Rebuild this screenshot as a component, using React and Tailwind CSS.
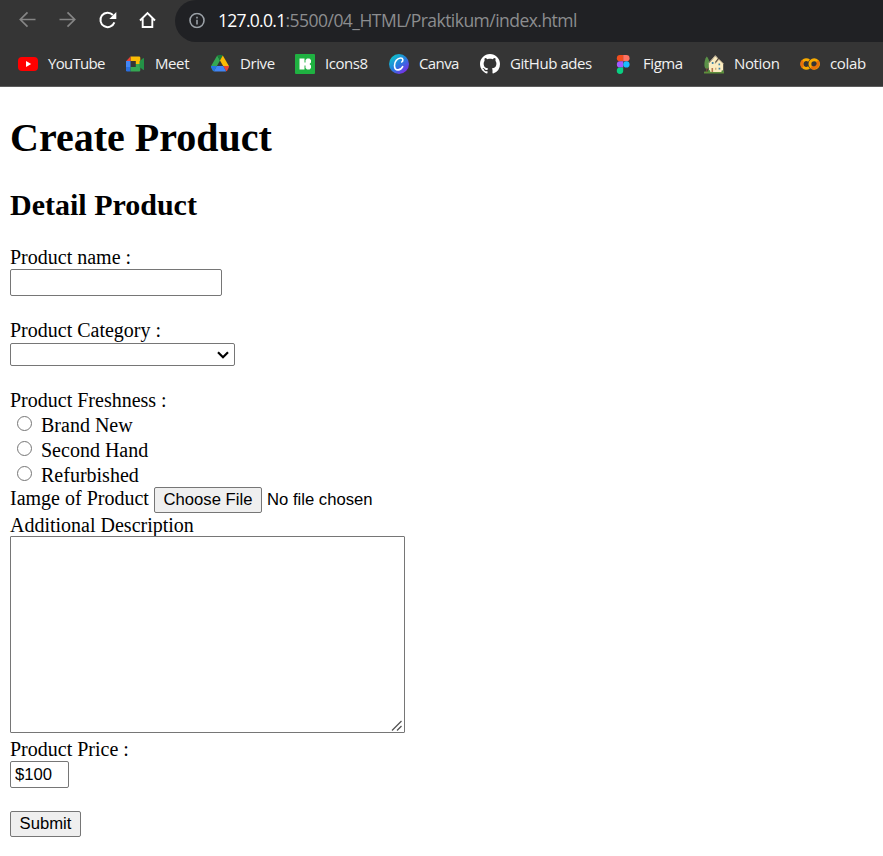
import React from "react";

function YouTubeIcon() {
  return (
    <svg viewBox="0 0 20 20" className="size-5">
      <rect x="0" y="3" width="20" height="14" rx="4" fill="#f00" />
      <path d="M8 7l5.2 3L8 13z" fill="#fff" />
    </svg>
  );
}

function MeetIcon() {
  return (
    <svg viewBox="0 0 20 20" className="size-5">
      <path d="M5.500 2.500H14a1.300 1.300 0 0 1 1.300 1.300V10H10.800V7H5.500z" fill="#fbbc04" />
      <path d="M1 7.200L5.500 2.500V7.200z" fill="#ea4335" />
      <path d="M1 7H5.500V13.500H1z" fill="#4285f4" />
      <path d="M1 13H5.500V17.500H2.300A1.300 1.300 0 0 1 1 16.200z" fill="#2a6fe0" />
      <path d="M5.500 13H10.800V10H15.300V16.200A1.300 1.300 0 0 1 14 17.500H5.500z" fill="#34a853" />
      <path d="M14.500 7.200L18 4.200q1-.6 1 .5V15.300q0 1.100-1 .5L14.500 13z" fill="#249247" />
    </svg>
  );
}

function DriveIcon() {
  return (
    <svg viewBox="0 0 20 20" className="size-5">
      <path d="M7.200 1.500L10 6.400 3.900 17.200Q3 17 2.600 16.200L1.200 13.600Q.8 12.800 1.100 12z" fill="#34a853" />
      <path d="M7.200 1.500Q8 1 8.800 1H11.200Q12.200 1 12.800 1.500L10 6.400z" fill="#188038" />
      <path d="M12.800 1.500L18.900 12H13.200L10 6.400z" fill="#fbbc04" />
      <path d="M13.200 12H18.900Q19.200 12.900 18.800 13.600L17.400 16.200Q17 17 16.100 17.200z" fill="#ea4335" />
      <path d="M6.800 12H13.200L16.100 17.200Q15.700 17.400 15 17.400H5Q4.300 17.400 3.900 17.200z" fill="#4285f4" />
      <path d="M1.100 12H6.800L3.900 17.200Q3 17 2.600 16.200L1.200 13.600Q.8 12.800 1.100 12z" fill="#2474e5" />
    </svg>
  );
}

function Icons8Icon() {
  return (
    <svg viewBox="0 0 20 20" className="size-5">
      <rect width="20" height="20" rx="1" fill="#1fb141" />
      <path
        d="M4.500 4.500H9.500V8.500H10.500V6L12 4.500H14.500L16 6V8.500L14.500 10 16 11.500V14L14.500 15.500H12L10.500 14V11.500H9.500V15.500H4.500z"
        fill="#fff"
      />
    </svg>
  );
}

function CanvaIcon() {
  return (
    <svg viewBox="0 0 20 20" className="size-5">
      <defs>
        <linearGradient id="canva" x1="0.100" y1="0.100" x2="0.800" y2="0.950">
          <stop offset="0" stopColor="#10c4c8" />
          <stop offset="0.500" stopColor="#237fdd" />
          <stop offset="1" stopColor="#7d2ae8" />
        </linearGradient>
      </defs>
      <circle cx="10" cy="10" r="10" fill="url(#canva)" />
      <path
        d="M12.700 7.900C14.400 7.300 14.400 4 11.700 4 8.300 4 5.500 7.800 5.500 11.400c0 2.800 1.400 4.500 3.600 4.500 2.100 0 3.700-1.400 4.600-3.200"
        fill="none"
        stroke="#fff"
        strokeWidth="1.600"
        strokeLinecap="round"
      />
    </svg>
  );
}

function GitHubIcon() {
  return (
    <svg viewBox="0 0 16 16" className="size-5">
      <path
        fill="#fff"
        d="M8 0C3.580 0 0 3.580 0 8c0 3.540 2.290 6.530 5.470 7.590.4.070.55-.17.55-.38 0-.19-.01-.82-.01-1.490-2.010.37-2.530-.49-2.690-.94-.09-.23-.48-.94-.82-1.130-.28-.15-.68-.52-.01-.53.63-.01 1.080.58 1.230.82.72 1.210 1.870.87 2.330.66.07-.52.28-.87.51-1.070-1.780-.2-3.640-.89-3.640-3.950 0-.87.31-1.590.82-2.150-.08-.2-.36-1.020.08-2.120 0 0 .67-.21 2.200.82.64-.18 1.320-.27 2-.27s1.360.09 2 .27c1.530-1.040 2.200-.82 2.200-.82.44 1.100.16 1.920.08 2.120.51.56.82 1.270.82 2.150 0 3.070-1.870 3.750-3.650 3.950.29.25.54.73.54 1.480 0 1.070-.01 1.930-.01 2.200 0 .21.15.46.55.38A8.010 8.010 0 0 0 16 8c0-4.420-3.580-8-8-8z"
      />
    </svg>
  );
}

function FigmaIcon() {
  return (
    <svg viewBox="0 0 20 20" className="size-5">
      <path d="M10.200 1H7a3.150 3.150 0 0 0 0 6.300h3.200z" fill="#f24e1e" />
      <path d="M10.200 1h3.200a3.150 3.150 0 0 1 0 6.300h-3.200z" fill="#ff7262" />
      <path d="M10.200 7.300H7a3.150 3.150 0 0 0 0 6.300h3.200z" fill="#a259ff" />
      <circle cx="13.400" cy="10.450" r="3.150" fill="#1abcfe" />
      <path d="M7 13.600h3.200v3.150A3.200 3.150 0 1 1 7 13.600z" fill="#0acf83" />
    </svg>
  );
}

function HouseIcon() {
  return (
    <svg viewBox="0 0 20 20" className="size-5">
      <rect x="0" y="17.500" width="20" height="2" rx=".5" fill="#5f8f3c" />
      <path d="M2.800 2.500C1 4.500.3 8 .4 11c.1 2.500 1 4 2.400 4s2.600-2 2.600-5S4.500 4 2.800 2.500z" fill="#5b9148" />
      <rect x="2.300" y="14" width="1" height="4" fill="#805538" />
      <path d="M4.800 9.500L11.300 2 19.200 9.500V18H4.800z" fill="#fbecc0" />
      <path d="M4.300 9.500L11.300 1.500 13.500 3.800" fill="none" stroke="#b9aa92" strokeWidth="1" />
      <path d="M10.800 10L15 5.300 19.600 10" fill="none" stroke="#bfae8e" strokeWidth=".8" />
      <path d="M11.300 8.500L14.800 4.200" stroke="#54493f" strokeWidth="1.100" />
      <path d="M7.800 8h1.700v2H7.800zM14.500 9.500h1.600v1.800h-1.600zM14.600 13.800h1.700v1.800h-1.700z" fill="#4386a8" />
      <path d="M7.500 14h1.600v4H7.500z" fill="#b3764c" />
      <path d="M11 13.700h1.400v2H11z" fill="#cfae77" />
      <circle cx="5" cy="17.300" r="1.200" fill="#4f8a3c" />
      <circle cx="18.500" cy="17.300" r="1.100" fill="#4f8a3c" />
    </svg>
  );
}

function ColabIcon() {
  return (
    <svg viewBox="0 0 20 20" className="size-5" fill="none" strokeWidth="2.900">
      <path d="M9 6.700A4.300 4.300 0 1 0 9 13.300" stroke="#f9ab00" />
      <path d="M3 6.900A4.300 4.300 0 0 0 3 13.100" stroke="#e8710a" />
      <circle cx="14.200" cy="10" r="4.300" stroke="#f9ab00" />
      <path d="M11.200 13A4.300 4.300 0 0 0 17.200 7" stroke="#e8710a" />
    </svg>
  );
}

const bookmarks = [
  { name: "YouTube", Icon: YouTubeIcon, width: "w-[107px]", tracking: "tracking-[-0.7px]" },
  { name: "Meet", Icon: MeetIcon, width: "w-[85px]", tracking: "tracking-[-0.4px]" },
  { name: "Drive", Icon: DriveIcon, width: "w-[85px]", tracking: "tracking-[-0.4px]" },
  { name: "Icons8", Icon: Icons8Icon, width: "w-[94px]", tracking: "tracking-[-0.45px]" },
  { name: "Canva", Icon: CanvaIcon, width: "w-[91px]", tracking: "tracking-[-0.6px]" },
  { name: "GitHub ades", Icon: GitHubIcon, width: "w-[133px]", tracking: "tracking-[-0.42px]" },
  { name: "Figma", Icon: FigmaIcon, width: "w-[91px]", tracking: "tracking-[-0.45px]" },
  { name: "Notion", Icon: HouseIcon, width: "w-[96px]", tracking: "tracking-[-0.35px]" },
  { name: "colab", Icon: ColabIcon, width: "w-[70px]", tracking: "tracking-[-0.35px]" },
];

function Toolbar() {
  return (
    <div className="flex h-[42px] items-start">
      <div className="flex gap-5 pt-[10px] pl-[18px]">
        <svg viewBox="0 0 20 20" className="size-5" fill="none" stroke="#858585" strokeWidth="1.700">
          <path d="M17.500 9.500H2.500M9.500 2.300L2.300 9.500l7.200 7.200" />
        </svg>
        <svg viewBox="0 0 20 20" className="size-5" fill="none" stroke="#858585" strokeWidth="1.700">
          <path d="M1.500 9.500H16.500M9.500 2.300l7.200 7.200-7.200 7.200" />
        </svg>
        <svg viewBox="0 0 20 20" className="size-5" fill="none" stroke="#fff" strokeWidth="2">
          <path d="M14.900 5A7.200 7.200 0 1 0 16.400 12.400" />
          <path d="M18.300 2v7h-7z" fill="#fff" stroke="none" />
        </svg>
        <svg viewBox="0 0 20 20" className="size-5" fill="none" stroke="#fff" strokeWidth="1.900">
          <path d="M2 10.500L9.500 3l7.500 7.500M4.700 8.500V17h9.600V8.500" />
        </svg>
      </div>
      <div className="ml-[17px] flex h-[42px] flex-1 items-center rounded-l-full bg-[#202124] pl-[14px]">
        <svg viewBox="0 0 16 16" className="size-4 -translate-y-[0.5px]" fill="none" stroke="#9aa0a6" strokeWidth="1.600">
          <circle cx="8" cy="8" r="7" />
          <path d="M8 7.200V12M8 4.200V5.900" />
        </svg>
        <div className="-mt-[3px] ml-[13px] text-[17.500px] leading-6 tracking-[-0.53px] whitespace-nowrap text-[#8c8d8f]">
          <span className="tracking-[-0.7px] text-white">127.0.0.1</span>:5500/04_HTML/Praktikum/index.html
        </div>
      </div>
    </div>
  );
}

function BookmarkBar() {
  return (
    <div className="flex h-[44px] items-center pl-[18px]">
      {bookmarks.map(({ name, Icon, width, tracking }) => (
        <div key={name} className={`flex shrink-0 items-center gap-[10px] text-[15px] leading-5 whitespace-nowrap text-[#f1f1f1] ${width} ${tracking}`}>
          <Icon />
          <span className="-mt-[2px]">{name}</span>
        </div>
      ))}
    </div>
  );
}

const conditions = ["Brand New", "Second Hand", "Refurbished"];

export default function App() {
  return (
    <div className="h-[856px] w-[883px] overflow-hidden bg-white text-black">
      <header className="h-[87px] border-b border-[#5c5c5c] bg-[#353535] font-['Open_Sans',sans-serif]">
        <Toolbar />
        <BookmarkBar />
      </header>
      <main className="flex flex-col items-start pt-[29px] pl-[10px] font-['Liberation_Serif',serif] text-[20px] leading-[22px]">
        <h1 className="text-[40px] leading-[44px] font-bold">Create Product</h1>
        <h2 className="mt-[28px] text-[30px] leading-[33px] font-bold">Detail Product</h2>

        <label htmlFor="name" className="mt-[25px]">Product name :</label>
        <input id="name" className="mt-px h-[27px] w-[212px] rounded-[2px] border border-[#767676]" />

        <label className="mt-[23px]">Product Category :</label>
        <div className="mt-[2px] flex h-[23px] w-[225px] items-center justify-end rounded-[2px] border border-[#767676] pr-[5px]">
          <svg viewBox="0 0 12 8" className="h-2 w-3" fill="none" stroke="#000" strokeWidth="2.200">
            <path d="M1 1.300L6 6.200l5-4.900" />
          </svg>
        </div>

        <p className="mt-[23px]">Product Freshness :</p>
        <div className="mt-[3px] flex flex-col gap-[3px]">
          {conditions.map((name) => (
            <label key={name} className="flex pl-[7px]">
              <span className="mt-[2px] mr-[9px] size-[15px] rounded-full border border-[#767676]" />
              {name}
            </label>
          ))}
        </div>

        <div className="mt-px flex h-[26px]">
          <span className="w-[144px]">Iamge of Product</span>
          <button className="flex h-[26px] w-[108px] justify-center rounded-[2px] border border-[#767676] bg-[#efefef] font-['Liberation_Sans',sans-serif] text-[16.667px] leading-[23px]">
            Choose File
          </button>
          <span className="ml-[5px] font-['Liberation_Sans',sans-serif] text-[16.667px] leading-[25px]">No file chosen</span>
        </div>

        <label htmlFor="description" className="mt-px">Additional Description</label>
        <div className="relative h-[197px] w-[395px]">
          <textarea id="description" className="block h-[197px] w-[395px] resize-none rounded-[1px] border border-[#767676]" />
          <svg viewBox="0 0 12 12" className="absolute right-[2px] bottom-px size-3" fill="none" stroke="#555" strokeWidth="1.300">
            <path d="M1 10.500L10.500 1M6 10.500l4.500-4.500" />
          </svg>
        </div>

        <label htmlFor="price" className="mt-[5px]">Product Price :</label>
        <input
          id="price"
          defaultValue="$100"
          className="mt-px h-[27px] w-[59px] rounded-[2px] border border-[#767676] px-[4px] font-['Liberation_Sans',sans-serif] text-[16.667px]"
        />

        <button className="mt-[23px] flex h-[26px] w-[71px] justify-center rounded-[2px] border border-[#767676] bg-[#efefef] font-['Liberation_Sans',sans-serif] text-[16.667px] leading-[23px]">
          Submit
        </button>
      </main>
    </div>
  );
}
